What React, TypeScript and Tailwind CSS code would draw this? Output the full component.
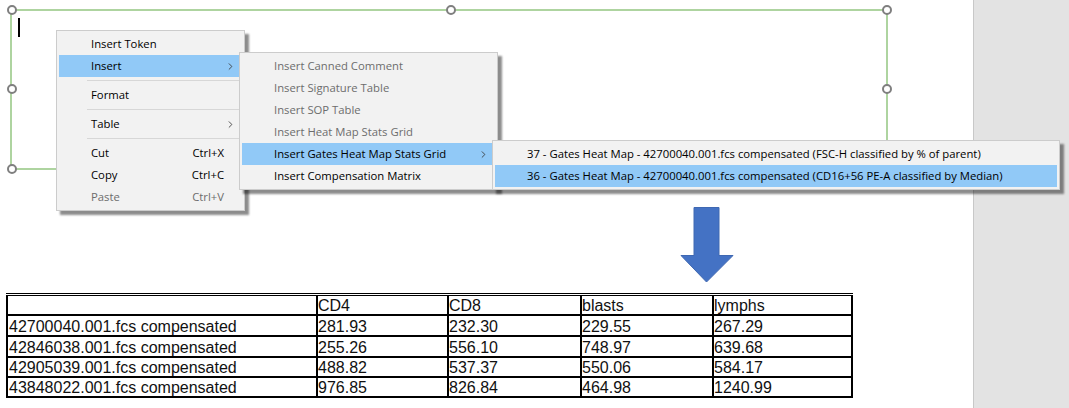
import { ChevronRight } from "lucide-react"

type MenuRow =
  | { sep: true }
  | { label: string; shortcut?: string; arrow?: boolean; active?: boolean; disabled?: boolean }

const MAIN_MENU: MenuRow[] = [
  { label: "Insert Token" },
  { label: "Insert", arrow: true, active: true },
  { sep: true },
  { label: "Format" },
  { sep: true },
  { label: "Table", arrow: true },
  { sep: true },
  { label: "Cut", shortcut: "Ctrl+X" },
  { label: "Copy", shortcut: "Ctrl+C" },
  { label: "Paste", shortcut: "Ctrl+V", disabled: true },
]

const INSERT_MENU: MenuRow[] = [
  { label: "Insert Canned Comment", disabled: true },
  { label: "Insert Signature Table", disabled: true },
  { label: "Insert SOP Table", disabled: true },
  { label: "Insert Heat Map Stats Grid", disabled: true },
  { label: "Insert Gates Heat Map Stats Grid", arrow: true, active: true },
  { label: "Insert Compensation Matrix" },
]

const GATES_MENU: MenuRow[] = [
  { label: "37 - Gates Heat Map - 42700040.001.fcs compensated (FSC-H classified by % of parent)" },
  { label: "36 - Gates Heat Map - 42700040.001.fcs compensated (CD16+56 PE-A classified by Median)", active: true },
]

const TABLE_HEAD = ["", "CD4", "CD8", "blasts", "lymphs"]
const TABLE_ROWS = [
  ["42700040.001.fcs compensated", "281.93", "232.30", "229.55", "267.29"],
  ["42846038.001.fcs compensated", "255.26", "556.10", "748.97", "639.68"],
  ["42905039.001.fcs compensated", "488.82", "537.37", "550.06", "584.17"],
  ["43848022.001.fcs compensated", "976.85", "826.84", "464.98", "1240.99"],
]

function Menu({ rows, className }: { rows: MenuRow[]; className: string }) {
  return (
    <div
      className={`absolute z-10 border border-[#cccccc] bg-[#f2f2f2] p-[2px] font-['Open_Sans',sans-serif] text-[11.3px] text-black shadow-[4px_4px_2px_rgba(0,0,0,0.45)] ${className}`}
    >
      {rows.map((row, i) =>
        "sep" in row ? (
          <div key={i} className="flex h-[7px] items-center pl-[28px]">
            <div className="h-px w-full bg-[#d7d7d7]" />
          </div>
        ) : (
          <div
            key={i}
            className={`flex h-[22px] items-center pl-[32px] pr-[4px] ${row.active ? "bg-[#91c9f7]" : ""} ${row.disabled ? "text-[#6d6d6d]" : ""}`}
          >
            <span className="flex-1 whitespace-nowrap">{row.label}</span>
            {row.shortcut && <span className="mr-[14px]">{row.shortcut}</span>}
            {row.arrow && <ChevronRight size={11} strokeWidth={1.8} className="-ml-[2px] mr-[2px] text-[#333333]" />}
          </div>
        )
      )}
    </div>
  )
}

function Handle({ className }: { className: string }) {
  return (
    <div className={`absolute size-[10px] rounded-full border-[2.5px] border-[#7f7f7f] bg-white ${className}`} />
  )
}

export default function App() {
  return (
    <div className="relative flex h-[408px] w-[1069px] overflow-hidden bg-white">
      <main className="w-[973px] pt-[207px]">
        {/* text box selection */}
        <div className="absolute left-[10px] top-[9px] h-[161px] w-[878px] border-2 border-[#aed4a0]">
          <Handle className="-left-[5px] -top-[6px]" />
          <Handle className="left-[434px] -top-[6px]" />
          <Handle className="-right-[6px] -top-[6px]" />
          <Handle className="-left-[5px] top-[73px]" />
          <Handle className="-right-[6px] top-[73px]" />
          <Handle className="-left-[5px] -bottom-[6px]" />
          <Handle className="-right-[6px] -bottom-[6px]" />
          <div className="absolute left-[6px] top-[7px] h-[19px] w-[2px] bg-black" />
        </div>

        <Menu rows={MAIN_MENU} className="left-[56px] top-[30px] w-[189px]" />
        <Menu rows={INSERT_MENU} className="left-[239px] top-[52px] w-[259px]" />
        <Menu rows={GATES_MENU} className="left-[492px] top-[140px] w-[568px]" />

        <svg width="54" height="76" viewBox="0 0 54 76" className="ml-[680px]">
          <path d="M14 .5h25v48h14L26.500 75 1 48.500h13z" fill="#4472c4" stroke="#3f68b2" />
        </svg>

        <table className="ml-[6px] mt-[10px] table-fixed border-collapse border-t-[3px] border-double border-black font-['Liberation_Sans',sans-serif] text-[16px] leading-[17px] text-[#111111]">
          <colgroup>
            <col className="w-[310px]" />
            <col className="w-[131px]" />
            <col className="w-[133px]" />
            <col className="w-[132px]" />
            <col className="w-[139px]" />
          </colgroup>
          <thead>
            <tr>
              {TABLE_HEAD.map((h, i) => (
                <td key={i} className="h-[20px] border-2 border-black p-0 pt-px">{h}</td>
              ))}
            </tr>
          </thead>
          <tbody>
            {TABLE_ROWS.map((row, r) => (
              <tr key={row[0]}>
                {row.map((cell, i) => (
                  <td
                    key={i}
                    className={`border-2 border-black p-0 pt-px ${r < 2 ? "h-[21px]" : "h-[20px]"} ${i === 0 ? "pl-px" : ""}`}
                  >
                    {cell}
                  </td>
                ))}
              </tr>
            ))}
          </tbody>
        </table>
      </main>
      <aside className="flex-1 border-l border-[#c8c8c8] bg-[#e3e3e3]" />
    </div>
  )
}
